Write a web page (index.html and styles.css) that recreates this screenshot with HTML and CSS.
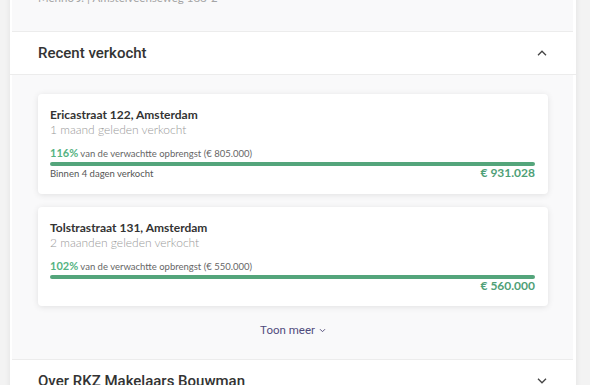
FILE: index.html
```html
<!DOCTYPE html>
<html lang="nl">
<head>
    <meta charset="UTF-8">
    <title>Recent verkocht</title>
    <link rel="stylesheet" href="styles.css">
</head>
<body>
<div class="panel">
    <div class="agent-block">
        <div class="agent-line">Menno J. | Amstelveenseweg 188-2</div>
    </div>

    <div class="section-header">
        <span>Recent verkocht</span>
        <svg class="chevron" width="10" height="6" viewBox="0 0 10 6"><path d="M1 5.2 L5 1.2 L9 5.2" fill="none" stroke="#444" stroke-width="1.3"/></svg>
    </div>

    <div class="section-body">
        <div class="sale-card">
            <div class="sale-title">Ericastraat 122, Amsterdam</div>
            <div class="sale-sub">1 maand geleden verkocht</div>
            <div class="sale-ratio"><b>116%</b> van de verwachtte opbrengst (€ 805.000)</div>
            <div class="bar"></div>
            <div class="sale-foot">
                <span class="sale-days">Binnen 4 dagen verkocht</span>
                <span class="sale-price">€ 931.028</span>
            </div>
        </div>

        <div class="sale-card">
            <div class="sale-title">Tolstrastraat 131, Amsterdam</div>
            <div class="sale-sub">2 maanden geleden verkocht</div>
            <div class="sale-ratio"><b>102%</b> van de verwachtte opbrengst (€ 550.000)</div>
            <div class="bar"></div>
            <div class="sale-foot">
                <span class="sale-days"></span>
                <span class="sale-price">€ 560.000</span>
            </div>
        </div>

        <div class="more">
            <a href="#">Toon meer</a>
            <svg width="7" height="5" viewBox="0 0 7 5"><path d="M1 1.2 L3.5 3.7 L6 1.2" fill="none" stroke="#5a5580" stroke-width="1"/></svg>
        </div>
    </div>

    <div class="section-header">
        <span>Over RKZ Makelaars Bouwman</span>
        <svg class="chevron" width="10" height="6" viewBox="0 0 10 6"><path d="M1 0.8 L5 4.8 L9 0.8" fill="none" stroke="#444" stroke-width="1.3"/></svg>
    </div>
</div>
</body>
</html>
```

FILE: styles.css
```css
* {
    box-sizing: border-box;
}

body {
    margin: 0;
    background-color: #f3f3f3;
    font-family: 'Lato', 'Roboto', sans-serif;
    overflow: hidden;
}

.panel {
    width: 566px;
    margin-left: 10px;
    background: white;
    box-shadow: 0 0 6px rgba(0, 0, 0, 0.08);
}

.agent-block {
    background: #f9f9fa;
    margin: 0 3px 0 2px;
    padding: 0 0 25px 26px;
    border-bottom: 1px solid #ececec;
}

.agent-line {
    margin-top: -10px;
    line-height: 16px;
    font-size: 11.5px;
    color: #a5a5a5;
}

.section-header {
    display: flex;
    justify-content: space-between;
    align-items: center;
    height: 43px;
    padding: 0 29px 0 28px;
    border-bottom: 1px solid #ececec;
    font-family: 'Roboto', sans-serif;
    font-size: 15px;
    font-weight: 500;
    color: #333;
}

.section-body {
    background: #f9f9fa;
    margin: 0 3px 0 2px;
    padding: 19px 25px 0 26px;
    border-bottom: 1px solid #ececec;
}

.sale-card {
    background: white;
    border-radius: 4px;
    box-shadow: 0 1px 6px rgba(0, 0, 0, 0.1);
    padding: 13px 13px 13px 12px;
    margin-bottom: 13px;
}

.sale-title {
    font-size: 12px;
    font-weight: 700;
    color: #333;
    line-height: 15px;
}

.sale-sub {
    font-size: 12px;
    font-weight: 300;
    color: #999;
    line-height: 15px;
}

.sale-ratio {
    margin-top: 9px;
    font-size: 9.5px;
    color: #666;
    line-height: 13px;
}

.sale-ratio b {
    font-size: 11px;
    color: #55b382;
}

.bar {
    height: 4px;
    border-radius: 2px;
    background: #54a57b;
    margin-top: 2px;
}

.sale-foot {
    display: flex;
    justify-content: space-between;
    align-items: baseline;
    line-height: 14px;
}

.sale-days {
    font-size: 9.5px;
    color: #555;
}

.sale-price {
    font-size: 12px;
    font-weight: 700;
    color: #4f9f77;
}

.more {
    display: flex;
    justify-content: center;
    align-items: center;
    gap: 4px;
    height: 40px;
    padding-bottom: 18px;
}

.more a {
    font-family: 'Roboto', sans-serif;
    font-size: 11.5px;
    color: #4f4a7c;
    text-decoration: none;
}
```
